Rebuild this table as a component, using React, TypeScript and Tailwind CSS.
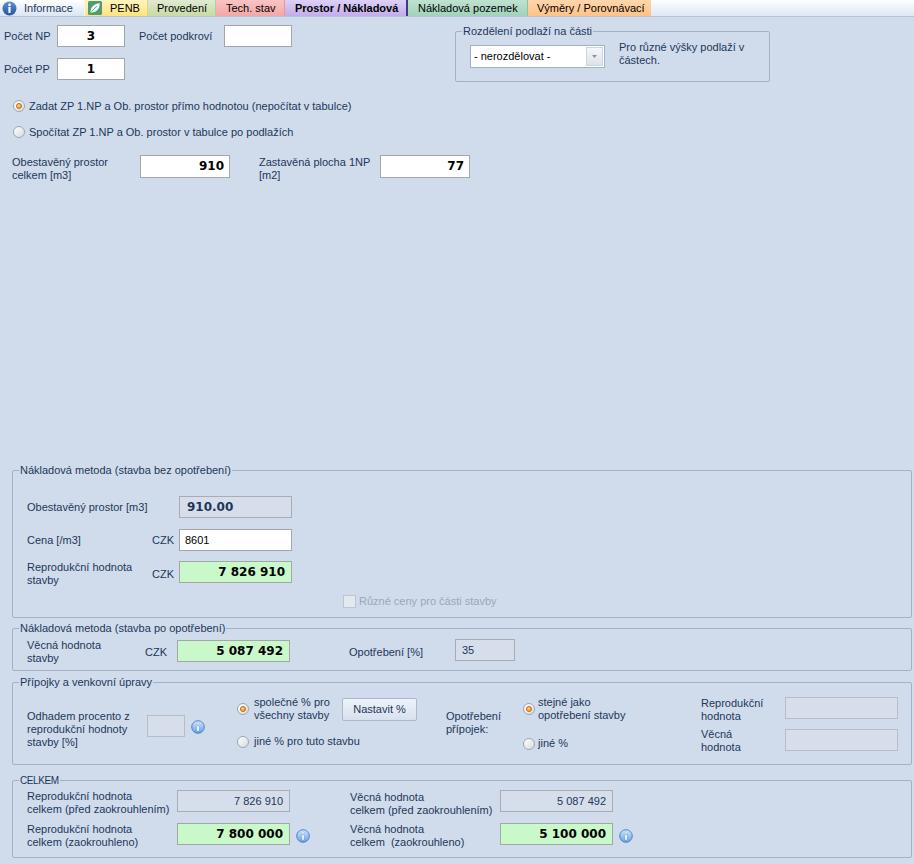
import type { ReactNode } from "react";

function InfoIcon() {
  return (
    <svg width="14" height="14" viewBox="0 0 14 14" className="shrink-0">
      <defs>
        <linearGradient id="infoFill" x1="0" y1="0" x2="0" y2="1">
          <stop offset="0" stopColor="#d3e6fb" />
          <stop offset="1" stopColor="#6a9fe0" />
        </linearGradient>
      </defs>
      <circle cx="7" cy="7" r="6.3" fill="url(#infoFill)" stroke="#3f7cc8" strokeWidth="0.9" />
      <circle cx="7" cy="3.9" r="1.1" fill="#fff" stroke="#5a8fd4" strokeWidth="0.3" />
      <rect x="6" y="5.7" width="2" height="5.2" rx="0.4" fill="#fff" stroke="#5a8fd4" strokeWidth="0.3" />
    </svg>
  );
}

function TabInfoIcon() {
  return (
    <svg width="15" height="15" viewBox="0 0 15 15" className="shrink-0">
      <defs>
        <linearGradient id="tabInfo" x1="0" y1="0" x2="0" y2="1">
          <stop offset="0" stopColor="#5f8fd0" />
          <stop offset="1" stopColor="#24579f" />
        </linearGradient>
      </defs>
      <circle cx="7.5" cy="7.5" r="7" fill="url(#tabInfo)" />
      <circle cx="7.5" cy="3.9" r="1.3" fill="#fff" />
      <rect x="6.4" y="6" width="2.2" height="6" rx="0.4" fill="#fff" />
    </svg>
  );
}

function LeafIcon() {
  return (
    <svg width="14" height="14" viewBox="0 0 14 14" className="shrink-0">
      <rect width="14" height="14" rx="1.5" fill="#4f9c74" />
      <path d="M2.4 11.6 C2.4 6 6 2.6 11.8 2.2 C11.8 8 8.4 11.6 2.4 11.6 Z" fill="#f4fbf6" />
      <path d="M3.4 10.6 L9.2 4.9" stroke="#4f9c74" strokeWidth="0.8" />
    </svg>
  );
}

function Radio({ checked }: { checked?: boolean }) {
  return (
    <span className="flex h-[12px] w-[12px] shrink-0 items-center justify-center rounded-full border border-[#9ea6b0] bg-gradient-to-br from-white to-[#d7dbe0]">
      {checked && (
        <span className="h-[6px] w-[6px] rounded-full border border-[#c8680a] bg-[radial-gradient(circle_at_35%_35%,#ffd98a,#ec8612)]" />
      )}
    </span>
  );
}

function Field({ className, children }: { className?: string; children?: ReactNode }) {
  return <div className={`flex h-[22px] shrink-0 items-center border ${className}`}>{children}</div>;
}

function Group({ title, className, titleClass, children }: { title: string; className?: string; titleClass?: string; children: ReactNode }) {
  return (
    <div className={`shrink-0 rounded-[2px] border border-[#a3b1c6] ${className}`}>
      <span className={`-mt-[7px] ml-[6px] block w-fit bg-[#d0dcec] px-[1px] leading-[13px] ${titleClass ?? ""}`}>{title}</span>
      {children}
    </div>
  );
}

const num = "font-['DejaVu_Sans',sans-serif] text-[12px] font-bold text-black";
const white = "border-[#a6a6a6] bg-white";
const gray = "border-[#a9adb3] bg-[#d5deea]";
const pale = "border-[#b8bdc5] bg-[#d5deea]";
const green = "border-[#a6a6a6] bg-[#c9f9c9] justify-end pr-[6px]";

export default function App() {
  return (
    <div className="flex h-[864px] w-[914px] flex-col overflow-hidden bg-[#d0dcec] font-['Liberation_Sans',Arial,sans-serif] text-[11px] leading-[13px] text-[#1d3759]">
      {/* tabs */}
      <div className="flex h-[17px] shrink-0 border-b border-[#b5c4d8] bg-gradient-to-b from-[#fdfeff] to-[#dfe8f4]">
        <div className="flex w-[85px] items-center gap-[7px] border-r border-[#f0f4fa] bg-gradient-to-b from-white to-[#dbe5f3] pl-[2px]">
          <TabInfoIcon />
          <span>Informace</span>
        </div>
        <div className="flex w-[63px] items-center gap-[8px] border-r border-[#e9d27a] bg-gradient-to-b from-[#fff5c0] to-[#ffe37a] pl-[3px] text-black">
          <LeafIcon />
          <span>PENB</span>
        </div>
        <div className="flex w-[68px] items-center border-r border-[#b9cc98] bg-gradient-to-b from-[#dfead0] to-[#c8daa6] pl-[9px] text-black">
          Provedení
        </div>
        <div className="flex w-[69px] items-center border-r border-[#e29a9a] bg-gradient-to-b from-[#fac4c4] to-[#f2a7a7] pl-[10px] text-black">
          Tech. stav
        </div>
        <div className="flex w-[123px] items-center border-r-2 border-[#3b3f78] bg-gradient-to-b from-[#ddd0f6] to-[#c3aceb] pl-[10px] font-bold text-black">
          Prostor / Nákladová
        </div>
        <div className="flex w-[120px] items-center border-r border-[#8cc2a8] bg-gradient-to-b from-[#bfe2d0] to-[#a1d2ba] pl-[10px] text-black">
          Nákladová pozemek
        </div>
        <div className="flex w-[123px] items-center bg-gradient-to-b from-[#ffd7ad] to-[#ffc288] pl-[9px] text-black">
          Výměry / Porovnávací
        </div>
      </div>

      {/* top */}
      <div className="flex shrink-0 items-start">
        <div className="ml-[4px] mt-[8px] flex flex-col gap-[11px]">
          <div className="flex items-center">
            <span className="w-[53px]">Počet NP</span>
            <Field className={`w-[68px] justify-center ${white}`}>
              <span className={num}>3</span>
            </Field>
          </div>
          <div className="flex items-center">
            <span className="w-[53px]">Počet PP</span>
            <Field className={`w-[68px] justify-center ${white}`}>
              <span className={num}>1</span>
            </Field>
          </div>
        </div>
        <div className="ml-[14px] mt-[8px] flex items-center">
          <span className="w-[85px]">Počet podkroví</span>
          <Field className={`w-[68px] ${white}`} />
        </div>
        <Group title="Rozdělení podlaží na části" className="ml-[163px] mt-[14px] h-[51px] w-[315px]">
          <div className="flex items-start">
            <div className="ml-[14px] mt-[7px] flex h-[23px] w-[135px] items-center border border-[#9fb0c8] bg-white pl-[3px] pr-[1px] text-black">
              <span className="flex-1">- nerozdělovat -</span>
              <span className="flex h-[19px] w-[17px] items-center justify-center border border-[#ccd4df] bg-gradient-to-b from-[#f5f7fa] to-[#dde3ea]">
                <svg width="5" height="3" viewBox="0 0 5 3">
                  <path d="M0 0h5L2.5 3z" fill="#8c9198" />
                </svg>
              </span>
            </div>
            <span className="ml-[14px] mt-[3px] w-[140px]">Pro různé výšky podlaží v částech.</span>
          </div>
        </Group>
      </div>

      <div className="ml-[13px] mt-[17px] flex h-[14px] shrink-0 items-center gap-[4px]">
        <Radio checked />
        <span>Zadat ZP 1.NP a Ob. prostor přímo hodnotou (nepočítat v tabulce)</span>
      </div>
      <div className="ml-[13px] mt-[12px] flex h-[14px] shrink-0 items-center gap-[4px]">
        <Radio />
        <span>Spočítat ZP 1.NP a Ob. prostor v tabulce po podlažích</span>
      </div>

      <div className="ml-[12px] mt-[16px] flex shrink-0 items-start">
        <span className="mt-[1px] w-[128px]">
          Obestavěný prostor
          <br />
          celkem [m3]
        </span>
        <Field className={`h-[23px] w-[90px] justify-end pr-[5px] ${white}`}>
          <span className={num}>910</span>
        </Field>
        <span className="ml-[29px] mt-[1px] w-[121px]">
          Zastavěná plocha 1NP
          <br />
          [m2]
        </span>
        <Field className={`h-[23px] w-[90px] justify-end pr-[5px] ${white}`}>
          <span className={num}>77</span>
        </Field>
      </div>

      <div className="flex-1" />

      {/* bottom groups */}
      <div className="ml-[12px] flex w-[900px] shrink-0 flex-col pb-[6px]">
        <Group title="Nákladová metoda (stavba bez opotřebení)" className="h-[148px]">
          <div className="ml-[14px] mt-[19px] flex items-center">
            <span className="w-[152px]">Obestavěný prostor [m3]</span>
            <Field className={`w-[113px] pl-[7px] ${gray}`}>
              <span className={`${num} !text-[#1d3759]`}>910.00</span>
            </Field>
          </div>
          <div className="ml-[14px] mt-[11px] flex items-center">
            <span className="w-[125px]">Cena [/m3]</span>
            <span className="w-[27px]">CZK</span>
            <Field className={`w-[113px] pl-[5px] text-black ${white}`}>8601</Field>
          </div>
          <div className="ml-[14px] mt-[10px] flex items-start">
            <span className="w-[125px]">
              Reprodukční hodnota
              <br />
              stavby
            </span>
            <span className="w-[27px] self-center">CZK</span>
            <Field className={`w-[113px] ${green}`}>
              <span className={num}>7 826 910</span>
            </Field>
          </div>
          <div className="ml-[330px] mt-[8px] flex items-center gap-[3px]">
            <span className="h-[13px] w-[13px] border border-[#bcc5d0] bg-[#e4e9ef]" />
            <span className="text-[#9ba7b5]">Různé ceny pro části stavby</span>
          </div>
        </Group>

        <Group title="Nákladová metoda (stavba po opotřebení)" className="mt-[10px] h-[43px]">
          <div className="ml-[14px] mt-[4px] flex items-start">
            <span className="w-[118px]">
              Věcná hodnota
              <br />
              stavby
            </span>
            <span className="w-[32px] self-center">CZK</span>
            <Field className={`mt-[1px] w-[113px] ${green}`}>
              <span className={num}>5 087 492</span>
            </Field>
            <span className="ml-[59px] w-[106px] self-center">Opotřebení [%]</span>
            <Field className={`w-[60px] pl-[6px] ${gray}`}>35</Field>
          </div>
        </Group>

        <Group title="Přípojky a venkovní úpravy" className="mt-[11px] h-[83px]">
          <div className="flex items-start">
            <div className="ml-[14px] mt-[21px] flex items-start">
              <span className="w-[120px]">
                Odhadem procento z
                <br />
                reprodukční hodnoty
                <br />
                stavby [%]
              </span>
              <Field className={`mt-[5px] w-[38px] ${pale}`} />
              <span className="ml-[6px] mt-[10px]">
                <InfoIcon />
              </span>
            </div>
            <div className="ml-[32px] mt-[7px] flex w-[209px] flex-col">
              <div className="flex items-center">
                <Radio checked />
                <span className="ml-[5px] w-[88px]">
                  společné % pro
                  <br />
                  všechny stavby
                </span>
                <button className="flex h-[23px] w-[75px] items-center justify-center rounded-[2px] border border-[#a9b9cd] bg-gradient-to-b from-[#eef3f9] to-[#d7e1ee] text-[#1d3759]">
                  Nastavit %
                </button>
              </div>
              <div className="mt-[13px] flex items-center">
                <Radio />
                <span className="ml-[5px]">jiné % pro tuto stavbu</span>
              </div>
            </div>
            <span className="mt-[21px] w-[77px]">
              Opotřebení
              <br />
              přípojek:
            </span>
            <div className="mt-[7px] flex w-[178px] flex-col">
              <div className="flex items-center">
                <Radio checked />
                <span className="ml-[3px]">
                  stejné jako
                  <br />
                  opotřebení stavby
                </span>
              </div>
              <div className="mt-[15px] flex items-center">
                <Radio />
                <span className="ml-[3px]">jiné %</span>
              </div>
            </div>
            <div className="mt-[8px] flex flex-col">
              <div className="flex items-start">
                <span className="w-[84px]">
                  Reprodukční
                  <br />
                  hodnota
                </span>
                <Field className={`w-[113px] ${pale}`} />
              </div>
              <div className="mt-[5px] flex items-start">
                <span className="w-[84px]">
                  Věcná
                  <br />
                  hodnota
                </span>
                <Field className={`mt-[1px] w-[113px] ${pale}`} />
              </div>
            </div>
          </div>
        </Group>

        <Group title="CELKEM" titleClass="text-[10px] tracking-[-0.4px]" className="mt-[15px] h-[78px]">
          <div className="ml-[14px] mt-[3px] flex items-start">
            <span className="w-[150px]">
              Reprodukční hodnota
              <br />
              celkem (před zaokrouhlením)
            </span>
            <Field className={`w-[113px] justify-end pr-[6px] ${gray}`}>7 826 910</Field>
            <span className="w-[60px]" />
            <span className="mt-[1px] w-[150px]">
              Věcná hodnota
              <br />
              celkem (před zaokrouhlením)
            </span>
            <Field className={`w-[113px] justify-end pr-[6px] ${gray}`}>5 087 492</Field>
          </div>
          <div className="ml-[14px] mt-[6px] flex items-start">
            <span className="w-[150px]">
              Reprodukční hodnota
              <br />
              celkem (zaokrouhleno)
            </span>
            <Field className={`w-[113px] ${green}`}>
              <span className={num}>7 800 000</span>
            </Field>
            <span className="ml-[6px] w-[54px] self-center">
              <InfoIcon />
            </span>
            <span className="w-[150px]">
              Věcná hodnota
              <br />
              celkem&nbsp; (zaokrouhleno)
            </span>
            <Field className={`w-[113px] ${green}`}>
              <span className={num}>5 100 000</span>
            </Field>
            <span className="ml-[6px] self-center">
              <InfoIcon />
            </span>
          </div>
        </Group>
      </div>
    </div>
  );
}
